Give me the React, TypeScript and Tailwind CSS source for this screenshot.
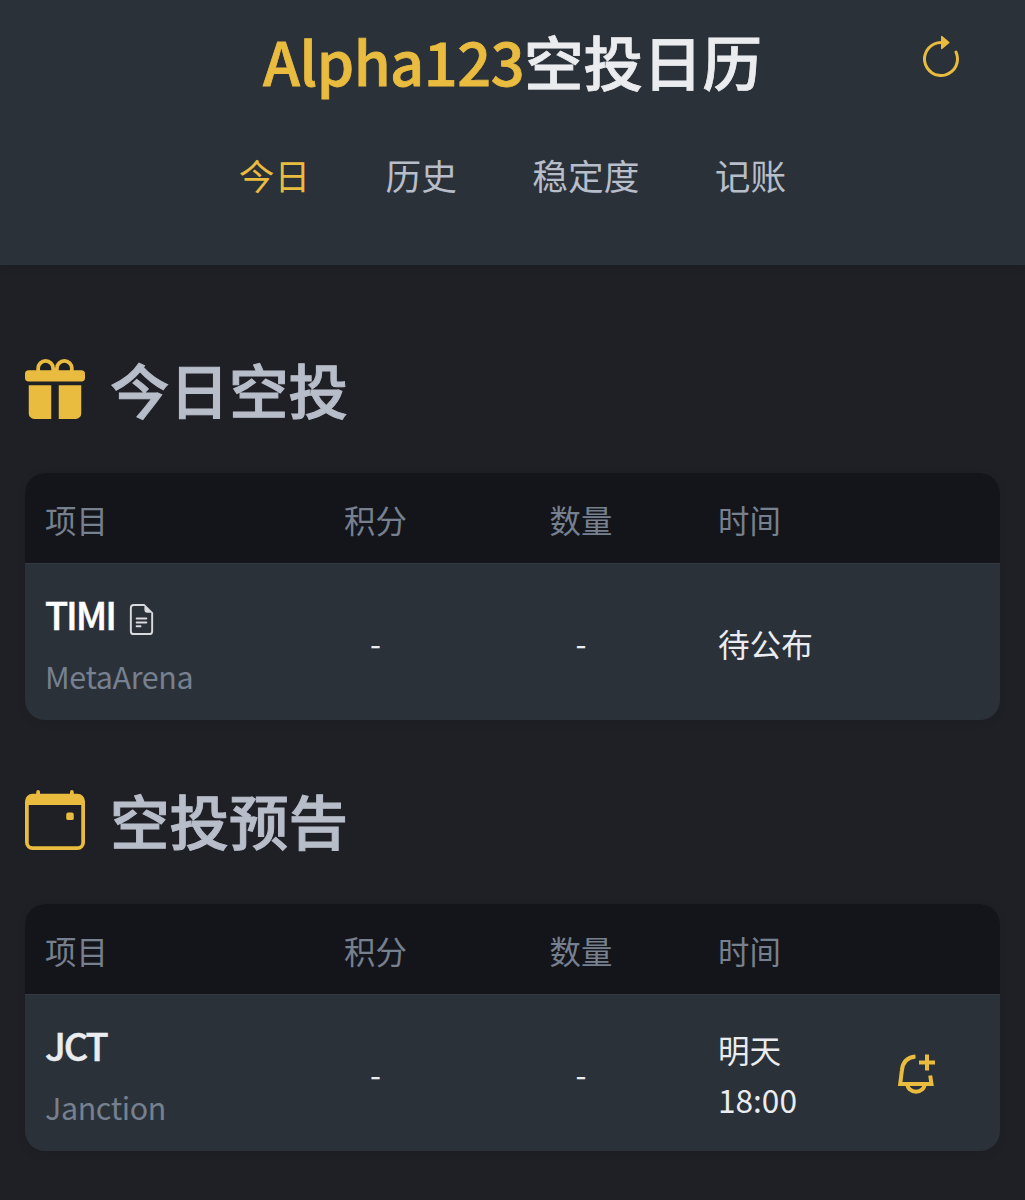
import React, { useState } from "react";
import {
  BsArrowClockwise,
  BsCalendarEvent,
  BsFileEarmarkText,
  BsGiftFill,
} from "react-icons/bs";

type Airdrop = {
  symbol: string;
  name: string;
  points: string;
  amount: string;
  time: string[];
  hasDoc?: boolean;
  canRemind?: boolean;
};

const tabs = ["今日", "历史", "稳定度", "记账"];

const todayList: Airdrop[] = [
  {
    symbol: "TIMI",
    name: "MetaArena",
    points: "-",
    amount: "-",
    time: ["待公布"],
    hasDoc: true,
  },
];

const upcomingList: Airdrop[] = [
  {
    symbol: "JCT",
    name: "Janction",
    points: "-",
    amount: "-",
    time: ["明天", "18:00"],
    canRemind: true,
  },
];

const BellPlusIcon = () => (
  <svg
    width="40"
    height="42"
    viewBox="0 0 40 42"
    fill="none"
    stroke="currentColor"
    strokeWidth="4"
  >
    <path d="M19.5 4.6C10 5.5 6.3 12 5.8 19L4.2 32H35.5L34.2 23.5" />
    <path d="M11.5 32.5a8.5 7.2 0 0 0 17 0" />
    <path d="M31 2.5v16M23 10.5h16" />
  </svg>
);

const columns = "grid grid-cols-[261px_179px_232px_135px_1fr]";

const AirdropTable = ({ rows }: { rows: Airdrop[] }) => {
  return (
    <div className="overflow-hidden rounded-[20px] bg-[#2b3139] shadow-[0_2px_10px_rgba(0,0,0,0.08)]">
      <div
        className={`${columns} h-[90px] items-center bg-[#14151a] pt-[3px] text-[31.4px] text-[#76808f]`}
      >
        <div className="pl-5">项目</div>
        <div className="text-center">积分</div>
        <div className="text-center">数量</div>
        <div className="pl-[21px]">时间</div>
      </div>
      {rows.map((row) => (
        <div
          key={row.symbol}
          className={`${columns} h-[157px] items-center border-t border-[#333a42] pt-0.5 text-[31.6px] text-[#eaecef]`}
        >
          <div className="pl-5">
            <div
              className={`flex items-center text-[38px] leading-[56px] font-medium tracking-[-2.1px] [-webkit-text-stroke:0.5px] ${
                row.hasDoc ? "text-white" : "text-[#eaecef]"
              }`}
            >
              {row.symbol}
              {row.hasDoc && (
                <BsFileEarmarkText className="mt-3 ml-[11px] size-[31px] text-[#d8dadd]" />
              )}
            </div>
            <div className="mt-[9px] text-[30.4px] leading-[50px] tracking-[-0.35px] text-[#76808f]">
              {row.name}
            </div>
          </div>
          <div className="text-center">{row.points}</div>
          <div className="text-center">{row.amount}</div>
          <div className="pl-[21px] leading-[50px] whitespace-nowrap">
            {row.time.map((t) => (
              <div key={t}>{t}</div>
            ))}
          </div>
          <div className="flex justify-center pb-0.5 text-[#e9bc3f]">
            {row.canRemind && <BellPlusIcon />}
          </div>
        </div>
      ))}
    </div>
  );
};

const SectionTitle = ({
  icon,
  title,
}: {
  icon: React.ReactNode;
  title: string;
}) => (
  <h2 className="mb-10 flex h-[88px] items-center gap-[25px] text-[59.5px] font-medium text-[#b7bdc9] [-webkit-text-stroke:1px]">
    <span className="text-[#e9bc3f] [-webkit-text-stroke:0]">{icon}</span>
    {title}
  </h2>
);

const App = () => {
  const [activeTab, setActiveTab] = useState("今日");

  return (
    <div className="min-h-[1200px] bg-[#1f2025] font-['Noto_Sans_CJK_SC',sans-serif]">
      <header className="relative h-[265px] bg-[#2b3139] pt-4 shadow-[0_2px_8px_rgba(0,0,0,0.08)]">
        <h1 className="text-center text-[59.5px] leading-[88px] font-medium text-[#eaecef] [-webkit-text-stroke:0.8px]">
          <span className="tracking-[-0.5px] text-[#e9bc3f]">Alpha123</span>
          空投日历
        </h1>
        <button className="absolute top-[35px] right-[60px] text-[#e9bc3f]">
          <BsArrowClockwise className="size-[48px]" />
        </button>
        <nav className="mt-[45px] flex justify-center gap-[75.4px] text-[35.7px] leading-[52px]">
          {tabs.map((tab) => (
            <button
              key={tab}
              onClick={() => setActiveTab(tab)}
              className={tab === activeTab ? "text-[#e9bc3f]" : "text-[#b7bdc9]"}
            >
              {tab}
            </button>
          ))}
        </nav>
      </header>

      <main className="px-[25px] pt-20">
        <section>
          <SectionTitle
            icon={<BsGiftFill className="size-[60px]" />}
            title="今日空投"
          />
          <AirdropTable rows={todayList} />
        </section>
        <section className="mt-14">
          <SectionTitle
            icon={<BsCalendarEvent className="size-[60px]" />}
            title="空投预告"
          />
          <AirdropTable rows={upcomingList} />
        </section>
      </main>
    </div>
  );
};

export default App;
